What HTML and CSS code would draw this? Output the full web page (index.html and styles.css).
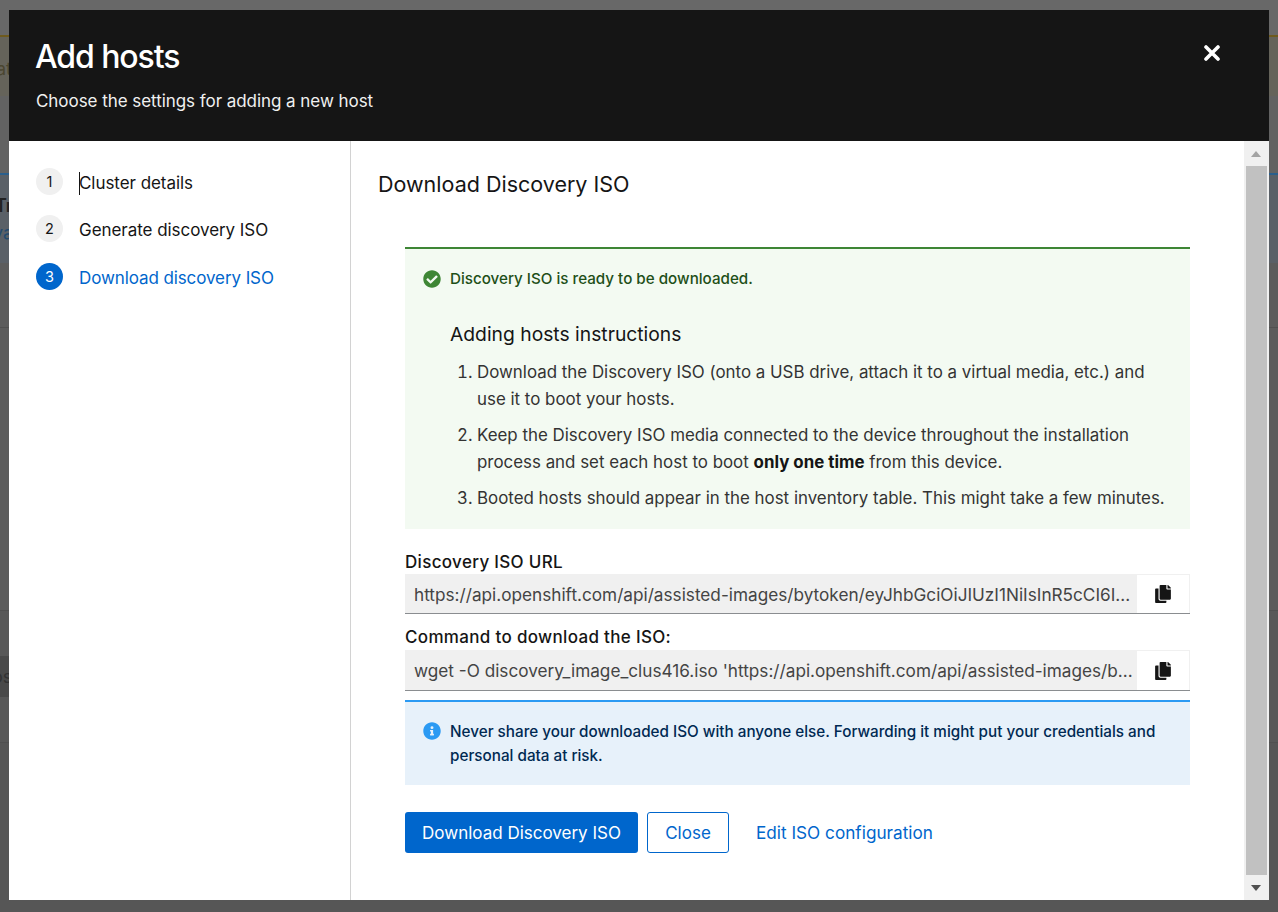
FILE: index.html
```html
<!DOCTYPE html>
<html lang="en">
<head>
<meta charset="utf-8">
<title>Add hosts</title>
<link rel="stylesheet" href="styles.css">
</head>
<body>
<div class="backdrop">
  <div class="bd-top"></div>
  <div class="bd-warn"><span>at</span></div>
  <div class="bd-gap"></div>
  <div class="bd-card"><span class="tr">Tr</span><span class="va">va</span></div>
  <div class="bd-row r1"></div>
  <div class="bd-row r2"></div>
  <div class="bd-row r3"><span class="os">os</span></div>
  <div class="bd-rest"></div>
</div>
<div class="modal">
  <header class="modal-head">
    <div>
      <h1>Add hosts</h1>
      <p>Choose the settings for adding a new host</p>
    </div>
    <svg class="close" viewBox="0 0 16 16" width="16" height="16"><path d="M2 2 L14 14 M14 2 L2 14" stroke="#fff" stroke-width="3.6" stroke-linecap="round" fill="none"/></svg>
  </header>
  <div class="modal-body">
    <nav class="steps">
      <div class="step"><span class="num">1</span><span class="label caret">Cluster details</span></div>
      <div class="step"><span class="num">2</span><span class="label">Generate discovery ISO</span></div>
      <div class="step current"><span class="num">3</span><span class="label">Download discovery ISO</span></div>
    </nav>
    <main class="content">
      <h2>Download Discovery ISO</h2>
      <section class="alert ok">
        <div class="alert-title">
          <svg viewBox="0 0 512 512" width="18" height="18"><path fill="#3e8635" d="M504 256c0 137-111 248-248 248S8 393 8 256 119 8 256 8s248 111 248 248zM227 387l184-184c6-6 6-16 0-22l-23-23c-6-6-16-6-22 0L216 308l-70-70c-6-6-16-6-22 0l-23 23c-6 6-6 16 0 22l104 104c6 6 16 6 22 0z"/></svg>
          <span>Discovery ISO is ready to be downloaded.</span>
        </div>
        <div class="alert-body">
          <h3>Adding hosts instructions</h3>
          <ol>
            <li>Download the Discovery ISO (onto a USB drive, attach it to a virtual media, etc.) and use it to boot your hosts.</li>
            <li>Keep the Discovery ISO media connected to the device throughout the installation process and set each host to boot <b>only one time</b> from this device.</li>
            <li>Booted hosts should appear in the host inventory table. This might take a few minutes.</li>
          </ol>
        </div>
      </section>
      <label class="field-label first">Discovery ISO URL</label>
      <div class="copy first-copy">
        <div class="copy-text">https://api.openshift.com/api/assisted-images/bytoken/eyJhbGciOiJIUzI1NiIsInR5cCI6I...</div>
        <button class="copy-btn" type="button"><svg viewBox="0 0 448 512" width="16" height="18"><path fill="#151515" d="M320 448v40c0 13-11 24-24 24H24c-13 0-24-11-24-24V120c0-13 11-24 24-24h72v296c0 31 25 56 56 56h168zM320 104V0H152c-13 0-24 11-24 24v368c0 13 11 24 24 24h272c13 0 24-11 24-24V128H344c-13 0-24-11-24-24zM441 73L375 7c-4-4-11-7-17-7h-6v96h96v-6c0-6-3-13-7-17z"/></svg></button>
      </div>
      <label class="field-label">Command to download the ISO:</label>
      <div class="copy">
        <div class="copy-text">wget -O discovery_image_clus416.iso 'https://api.openshift.com/api/assisted-images/b...</div>
        <button class="copy-btn" type="button"><svg viewBox="0 0 448 512" width="16" height="18"><path fill="#151515" d="M320 448v40c0 13-11 24-24 24H24c-13 0-24-11-24-24V120c0-13 11-24 24-24h72v296c0 31 25 56 56 56h168zM320 104V0H152c-13 0-24 11-24 24v368c0 13 11 24 24 24h272c13 0 24-11 24-24V128H344c-13 0-24-11-24-24zM441 73L375 7c-4-4-11-7-17-7h-6v96h96v-6c0-6-3-13-7-17z"/></svg></button>
      </div>
      <section class="alert info">
        <svg viewBox="0 0 512 512" width="18" height="18"><path fill="#2b9af3" d="M256 8C119 8 8 119 8 256s111 248 248 248 248-111 248-248S393 8 256 8zm0 110a42 42 0 1 1 0 84 42 42 0 0 1 0-84zm56 254c0 7-5 12-12 12h-88c-7 0-12-5-12-12v-24c0-7 5-12 12-12h12v-64h-12c-7 0-12-5-12-12v-24c0-7 5-12 12-12h64c7 0 12 5 12 12v100h12c7 0 12 5 12 12v24z"/></svg>
        <span>Never share your downloaded ISO with anyone else. Forwarding it might put your credentials and personal data at risk.</span>
      </section>
      <div class="actions">
        <button class="btn primary" type="button">Download Discovery ISO</button>
        <button class="btn secondary" type="button">Close</button>
        <a class="link" href="#">Edit ISO configuration</a>
      </div>
    </main>
    <div class="scrollbar">
      <div class="arrow up"></div>
      <div class="thumb"></div>
      <div class="arrow down"></div>
    </div>
  </div>
</div>
</body>
</html>
```
FILE: styles.css
```css
* { box-sizing: border-box; }
html, body { margin: 0; height: 912px; overflow: hidden; }
body {
  position: relative;
  background: #5a5a5a;
  font-family: Inter, "Open Sans", sans-serif;
  color: #151515;
  font-size: 16px;
}
.backdrop { height: 912px; display: flex; flex-direction: column; overflow: hidden; font-size: 18px; }
.bd-top { height: 35px; flex: none; background: #686868; }
.bd-warn { height: 61px; flex: none; background: #65635a; border-top: 2px solid #6e5a1e; color: #4b4630; padding-top: 21px; line-height: 22px; }
.bd-warn span { display: block; margin-left: -4px; }
.bd-gap { height: 77px; flex: none; background: #626262; }
.bd-card { height: 90px; flex: none; background: #5a6067; border-top: 2px solid #2b5f8c; position: relative; }
.tr { position: absolute; left: -5px; top: 20px; color: #222; font-weight: 600; }
.va { position: absolute; left: -7px; top: 47px; color: #234a6e; }
.bd-row { flex: none; border-bottom: 1px solid #505050; background: #5c5c5c; }
.r1 { height: 65px; }
.r2 { height: 283px; }
.r3 { height: 132px; background: #585858; padding-top: 45px; }
.os { display: block; width: 9px; height: 41px; background: #4a4a4a; color: #333; overflow: hidden; line-height: 41px; text-indent: -8px; }
.bd-rest { flex: 1; background: #565656; }
.modal {
  position: absolute; left: 9px; top: 10px; width: 1260px; height: 890px;
  background: #fff; display: flex; flex-direction: column;
}
.modal-head {
  height: 131px; flex: none; background: #151515; color: #fff;
  padding: 24px 49px 0 27px;
  display: flex; justify-content: space-between; align-items: flex-start;
}
.modal-head h1 { margin: 0 0 0 -1px; font-size: 32px; font-weight: 500; line-height: 46px; letter-spacing: -1.1px; }
.modal-head p { margin: 9px 0 0; font-size: 17px; line-height: 24px; color: #f0f0f0; letter-spacing: -0.05px; }
.close { margin: 11px 0 0; }
.modal-body { flex: 1; display: flex; min-height: 0; }
.steps { width: 342px; flex: none; border-right: 1px solid #d2d2d2; padding: 27px 27px 0; }
.step { display: flex; align-items: center; height: 27px; margin-bottom: 21px; font-size: 17px; letter-spacing: -0.05px; }
.step:first-child { margin-bottom: 20px; }
.num {
  width: 27px; height: 27px; border-radius: 50%; background: #f0f0f0;
  display: flex; align-items: center; justify-content: center;
  font-size: 14.5px; flex: none; margin-right: 16px;
}
.label { line-height: 30px; margin-top: 2px; }
.caret { box-shadow: inset 1px 0 0 #151515; line-height: 23px; height: 23px; margin-top: 3px; }
.current .num { background: #0066cc; color: #fff; }
.current .label { color: #0066cc; letter-spacing: -0.1px; }
.content { flex: 1; padding: 30px 54px 0 27px; min-width: 0; }
.content h2 { margin: 0 0 50px; font-size: 21.5px; font-weight: 400; line-height: 26px; letter-spacing: 0; }
.alert { margin-left: 27px; }
.ok { background: #f3faf2; border-top: 2px solid #3e8635; height: 282px; padding: 20px 18px 0; }
.alert-title { display: flex; align-items: center; gap: 9px; color: #1e4f18; font-size: 15.2px; font-weight: 500; line-height: 20px; }
.alert-body { padding-left: 27px; }
.alert-body h3 { margin: 32px 0 0; font-size: 19.3px; font-weight: 400; line-height: 26px; }
ol { margin: 12px 0 0; padding-left: 27px; font-size: 16.9px; line-height: 27px; color: #333; }
li { margin-bottom: 9px; }
li b { font-weight: 700; color: #151515; }
.field-label { display: block; margin: 11px 0 1px 27px; font-size: 17px; font-weight: 500; line-height: 24px; letter-spacing: 0.33px; }
.field-label.first { margin: 21px 0 0 27px; }
.copy { display: flex; height: 41px; margin-left: 27px; border-bottom: 1px solid #8a8d90; }
.first-copy { height: 40px; }
.copy-text {
  flex: 1; min-width: 0; background: #f0f0f0; color: #444; padding: 0 9px;
  line-height: 41px; font-size: 17.2px; white-space: nowrap; overflow: hidden;
}
.copy-btn {
  width: 53px; flex: none; background: #fff; border: 1px solid #f0f0f0; border-width: 1px 1px 0 0;
  padding: 0; display: flex; align-items: center; justify-content: center;
}
.info {
  display: flex; gap: 9px; background: #e7f1fa; border-top: 2px solid #2b9af3;
  height: 85px; margin-top: 9px; padding: 18px 18px 0;
  color: #002952; font-size: 15.25px; font-weight: 500; line-height: 24px;
}
.info svg { flex: none; margin-top: 2px; }
.actions { display: flex; align-items: center; margin: 27px 0 0 27px; }
.btn { height: 41px; border-radius: 3px; font: inherit; font-size: 17px; padding: 0 17px; }
.primary { background: #0066cc; color: #fff; border: 0; width: 233px; white-space: nowrap; }
.secondary { background: #fff; color: #0066cc; border: 1px solid #0066cc; margin-left: 9px; width: 82px; }
.link { color: #0066cc; text-decoration: none; margin-left: 27px; font-size: 17.2px; }
.scrollbar { width: 25px; flex: none; background: #f0f0f0; display: flex; flex-direction: column; align-items: center; }
.arrow { height: 25px; flex: none; width: 100%; position: relative; }
.arrow::after { content: ""; position: absolute; left: 7px; border-left: 5.5px solid transparent; border-right: 5.5px solid transparent; }
.up::after { top: 10px; border-bottom: 6px solid #a3a3a3; }
.down::after { top: 10px; border-top: 6px solid #505050; }
.thumb { width: 21px; flex: 1; background: #c1c1c1; }
```
